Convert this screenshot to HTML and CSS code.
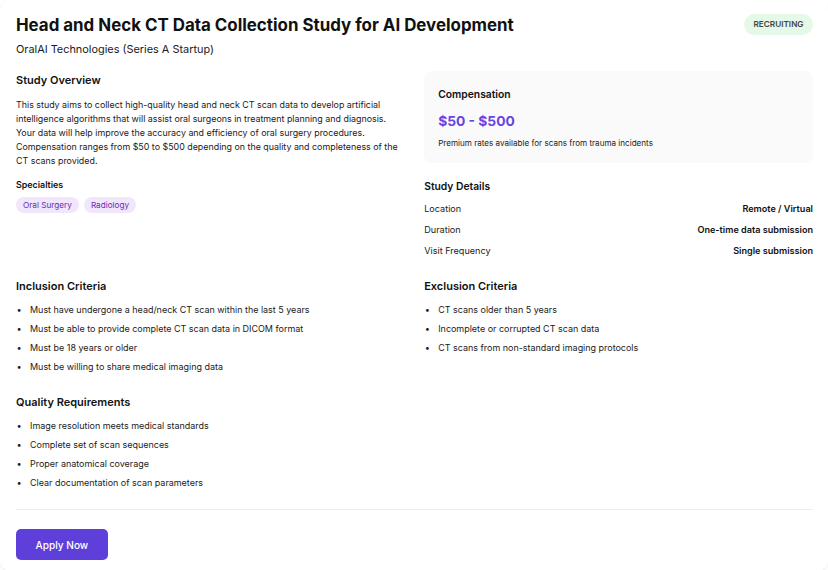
FILE: index.html
```html
<!DOCTYPE html>
<html lang="en">
<head>
<meta charset="utf-8">
<title>Head and Neck CT Data Collection Study</title>
<link rel="stylesheet" href="styles.css">
</head>
<body>
<div class="card">
  <header class="header">
    <div>
      <h1 class="title">Head and Neck CT Data Collection Study for AI Development</h1>
      <p class="subtitle">OralAI Technologies (Series A Startup)</p>
    </div>
    <span class="badge">RECRUITING</span>
  </header>

  <div class="grid">
    <section>
      <h2 class="heading">Study Overview</h2>
      <p class="desc">This study aims to collect high-quality head and neck CT scan data to develop artificial intelligence algorithms that will assist oral surgeons in treatment planning and diagnosis. Your data will help improve the accuracy and efficiency of oral surgery procedures. Compensation ranges from $50 to $500 depending on the quality and completeness of the CT scans provided.</p>
      <h3 class="subheading">Specialties</h3>
      <div class="tags">
        <span class="tag">Oral Surgery</span>
        <span class="tag">Radiology</span>
      </div>
    </section>

    <section>
      <div class="comp">
        <h3 class="comp-title">Compensation</h3>
        <div class="price">$50 - $500</div>
        <p class="comp-note">Premium rates available for scans from trauma incidents</p>
      </div>
      <h2 class="heading details-heading">Study Details</h2>
      <dl class="details">
        <div class="row"><dt>Location</dt><dd>Remote / Virtual</dd></div>
        <div class="row"><dt>Duration</dt><dd>One-time data submission</dd></div>
        <div class="row"><dt>Visit Frequency</dt><dd>Single submission</dd></div>
      </dl>
    </section>

    <section>
      <h2 class="heading">Inclusion Criteria</h2>
      <ul class="list">
        <li>Must have undergone a head/neck CT scan within the last 5 years</li>
        <li>Must be able to provide complete CT scan data in DICOM format</li>
        <li>Must be 18 years or older</li>
        <li>Must be willing to share medical imaging data</li>
      </ul>
    </section>

    <section>
      <h2 class="heading">Exclusion Criteria</h2>
      <ul class="list">
        <li>CT scans older than 5 years</li>
        <li>Incomplete or corrupted CT scan data</li>
        <li>CT scans from non-standard imaging protocols</li>
      </ul>
    </section>

    <section>
      <h2 class="heading">Quality Requirements</h2>
      <ul class="list">
        <li>Image resolution meets medical standards</li>
        <li>Complete set of scan sequences</li>
        <li>Proper anatomical coverage</li>
        <li>Clear documentation of scan parameters</li>
      </ul>
    </section>
  </div>

  <div class="footer">
    <button class="apply">Apply Now</button>
  </div>
</div>
</body>
</html>
```

FILE: styles.css
```css
* { box-sizing: border-box; }
html, body { margin: 0; padding: 0; background: #fff; }
body {
  font-family: Inter, "Noto Sans", "Liberation Sans", sans-serif;
  color: #1a1a1a;
}
h1, h2, h3, p, ul, dl, dd { margin: 0; padding: 0; }

.card {
  background: #fff;
  border-radius: 10px;
  box-shadow: 0 1px 3px rgba(0,0,0,0.08);
  padding: 16px 15px 11px 16px;
  min-height: 570px;
}

.header {
  display: flex;
  justify-content: space-between;
  align-items: flex-start;
  margin-bottom: 14px;
}
.title {
  font-size: 16.9px;
  line-height: 19px;
  font-weight: 700;
  color: #111;
}
.subtitle {
  margin-top: 6px;
  font-size: 10.9px;
  line-height: 16px;
  color: #1a1a1a;
}
.badge {
  margin-top: -2px;
  background: #e4f9e8;
  color: #444;
  font-size: 8.2px;
  font-weight: 600;
  line-height: 21px;
  padding: 0 9.5px;
  border-radius: 999px;
}

.grid {
  display: grid;
  grid-template-columns: 1fr 1fr;
  column-gap: 19.4px;
  row-gap: 19px;
}

.heading {
  font-size: 11px;
  line-height: 18px;
  font-weight: 600;
  color: #111;
}
.desc {
  margin-top: 8.6px;
  font-size: 8.9px;
  line-height: 14.2px;
  color: #1a1a1a;
}
.subheading {
  margin-top: 9.5px;
  font-size: 8.9px;
  line-height: 14px;
  font-weight: 600;
  color: #111;
}
.tags {
  margin-top: 5px;
  display: flex;
  gap: 5px;
}
.tag {
  background: #f1e6fc;
  color: #6b2bb0;
  font-size: 8.2px;
  line-height: 16px;
  padding: 0 7px;
  border-radius: 999px;
}

.comp {
  background: #fafafa;
  border-radius: 8px;
  padding: 14px;
}
.comp-title {
  font-size: 10.3px;
  line-height: 18px;
  font-weight: 600;
  color: #111;
}
.price {
  margin-top: 6px;
  font-size: 13.8px;
  line-height: 24px;
  font-weight: 700;
  color: #6a45e0;
}
.comp-note {
  margin-top: 4px;
  font-size: 8.1px;
  line-height: 12px;
  color: #1a1a1a;
}

.details-heading { margin-top: 14px; font-size: 10.3px; }
.details {
  margin-top: 7px;
  display: flex;
  flex-direction: column;
  gap: 7px;
}
.row {
  display: flex;
  justify-content: space-between;
  font-size: 9.1px;
  line-height: 14px;
}
.row dt { color: #1a1a1a; }
.row dd { font-weight: 600; color: #111; }

.list {
  margin-top: 8px;
  list-style: none;
  display: flex;
  flex-direction: column;
  gap: 5px;
}
.list li {
  display: flex;
  font-size: 8.96px;
  line-height: 14px;
  color: #1a1a1a;
}
.list li::before {
  content: "\2022";
  flex: 0 0 13px;
  padding-left: 1px;
  font-weight: 700;
}

.footer {
  margin-top: 19px;
  border-top: 1px solid #ececec;
  padding-top: 19px;
}
.apply {
  background: #5e3fd9;
  color: #fff;
  border: none;
  border-radius: 5px;
  font-family: inherit;
  font-size: 10.1px;
  font-weight: 500;
  height: 31px;
  padding: 0 19.5px;
}
```
